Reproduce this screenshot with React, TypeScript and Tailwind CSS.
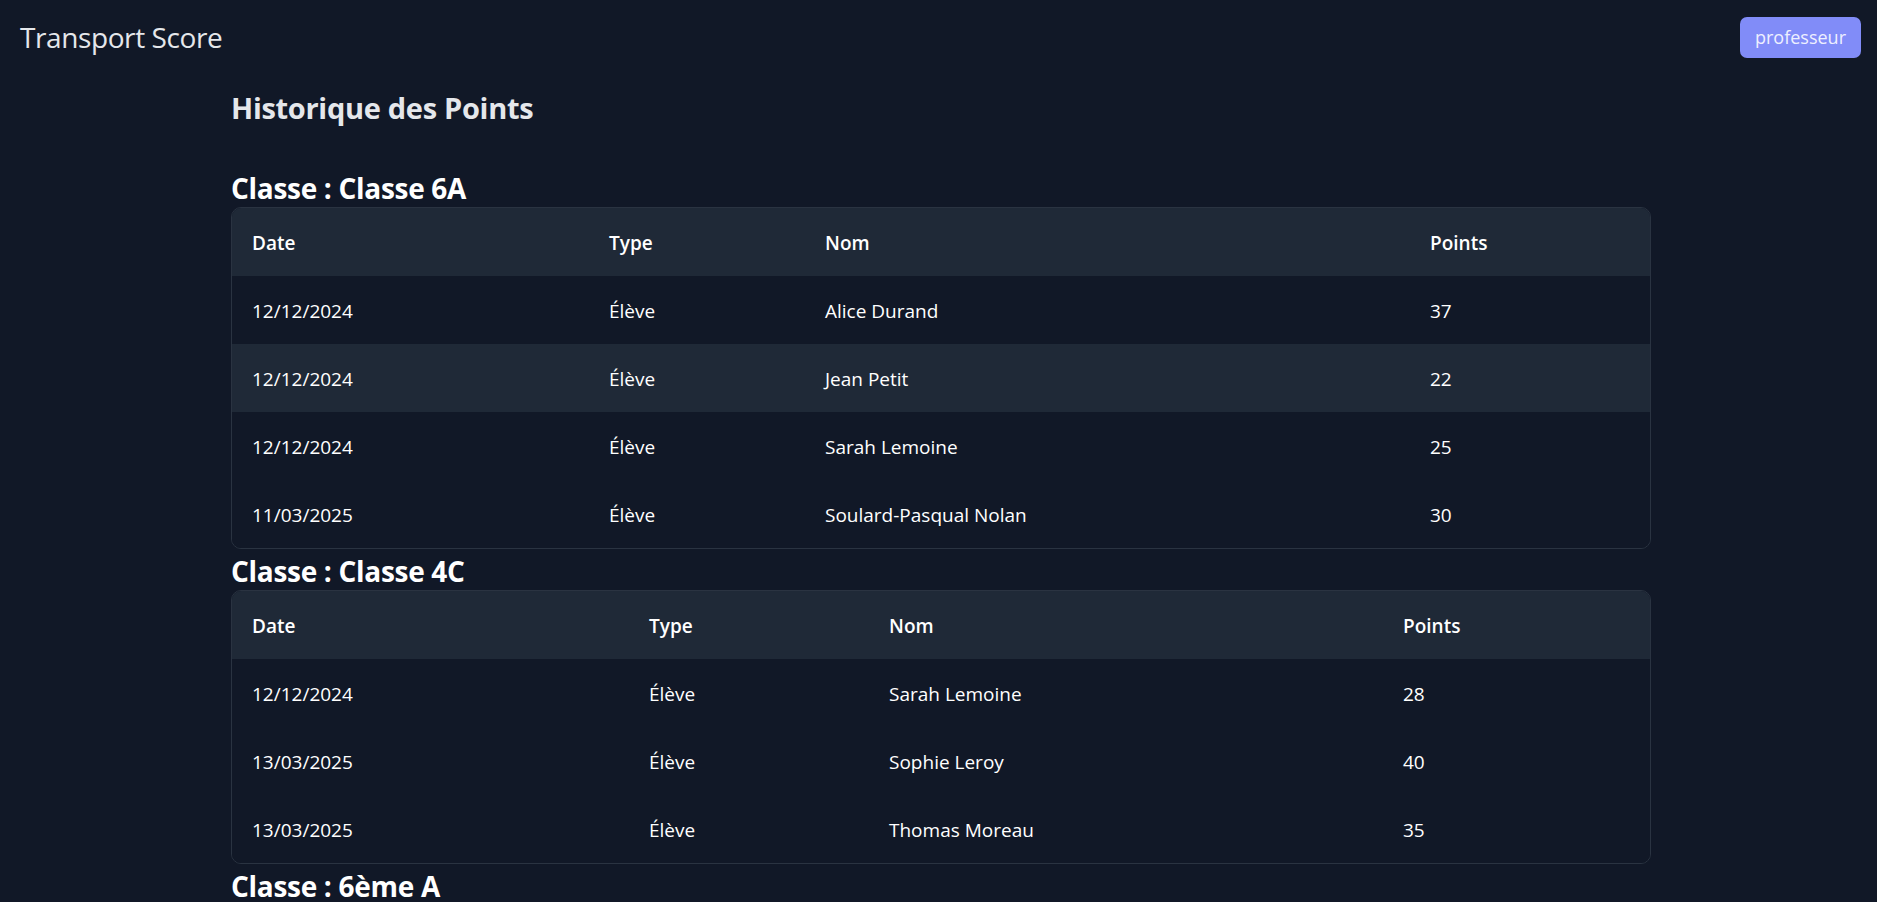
import React from 'react';

interface Row {
    date: string;
    type: string;
    nom: string;
    points: number;
}

interface ClassGroup {
    name: string;
    cols: [string, string, string, string];
    rows: Row[];
    highlight?: number;
}

const groups: ClassGroup[] = [
    {
        name: 'Classe 6A',
        cols: ['w-[357px]', 'w-[216px]', 'w-[605px]', 'w-[240px]'],
        highlight: 1,
        rows: [
            { date: '12/12/2024', type: 'Élève', nom: 'Alice Durand', points: 37 },
            { date: '12/12/2024', type: 'Élève', nom: 'Jean Petit', points: 22 },
            { date: '12/12/2024', type: 'Élève', nom: 'Sarah Lemoine', points: 25 },
            { date: '11/03/2025', type: 'Élève', nom: 'Soulard-Pasqual Nolan', points: 30 },
        ],
    },
    {
        name: 'Classe 4C',
        cols: ['w-[397px]', 'w-[240px]', 'w-[514px]', 'w-[267px]'],
        rows: [
            { date: '12/12/2024', type: 'Élève', nom: 'Sarah Lemoine', points: 28 },
            { date: '13/03/2025', type: 'Élève', nom: 'Sophie Leroy', points: 40 },
            { date: '13/03/2025', type: 'Élève', nom: 'Thomas Moreau', points: 35 },
        ],
    },
    {
        name: '6ème A',
        cols: ['w-[357px]', 'w-[216px]', 'w-[605px]', 'w-[240px]'],
        rows: [
            { date: '12/12/2024', type: 'Élève', nom: 'Lucas Martin', points: 18 },
        ],
    },
];

const headers = ['Date', 'Type', 'Nom', 'Points'];

const ClassTable = ({ group, first }: { group: ClassGroup; first: boolean }) => (
    <section className={first ? '' : 'mt-[4px]'}>
        <h2 className="text-[28px] leading-[36px] font-bold text-white tracking-[-0.3px]">Classe : {group.name}</h2>
        <div className="mt-[1px] border border-[#2a3341] rounded-[10px] overflow-hidden">
            <table className="w-full table-fixed border-collapse text-left">
                <thead>
                    <tr className="bg-[#1f2937] h-[68px]">
                        {headers.map((h, i) => (
                            <th key={h} className={`${group.cols[i]} px-5 pt-[3px] text-[19px] font-semibold text-white`}>
                                {h}
                            </th>
                        ))}
                    </tr>
                </thead>
                <tbody>
                    {group.rows.map((r, idx) => (
                        <tr key={idx} className={`h-[68px] ${group.highlight === idx ? 'bg-[#1f2937]' : 'bg-[#111827]'}`}>
                            <td className="px-5 pt-[3px] text-[19px] text-white">{r.date}</td>
                            <td className="px-5 pt-[3px] text-[19px] text-white">{r.type}</td>
                            <td className="px-5 pt-[3px] text-[19px] text-white">{r.nom}</td>
                            <td className="px-5 pt-[3px] text-[19px] text-white">{r.points}</td>
                        </tr>
                    ))}
                </tbody>
            </table>
        </div>
    </section>
);

export default function App() {
    return (
        <div className="min-h-screen bg-[#111827] font-['Open_Sans',sans-serif] text-gray-100">
            <header className="flex items-center justify-between pl-5 pr-4 pt-[17px] pb-[16px]">
                <h1 className="text-[28px] leading-[41px] font-medium text-[#e5e7eb] tracking-[-0.4px]">Transport Score</h1>
                <button className="h-[41px] px-[15px] rounded-[7px] bg-[#818cf8] text-[18px] text-[#eef0ff]">
                    professeur
                </button>
            </header>
            <main className="w-[1420px] ml-[231px]">
                <h2 className="mt-[16px] text-[29px] leading-[36px] font-bold text-[#e5e7eb] tracking-[-0.3px]">Historique des Points</h2>
                <div className="mt-[44px]">
                    {groups.map((g, i) => (
                        <ClassTable key={g.name} group={g} first={i === 0} />
                    ))}
                </div>
            </main>
        </div>
    );
}
